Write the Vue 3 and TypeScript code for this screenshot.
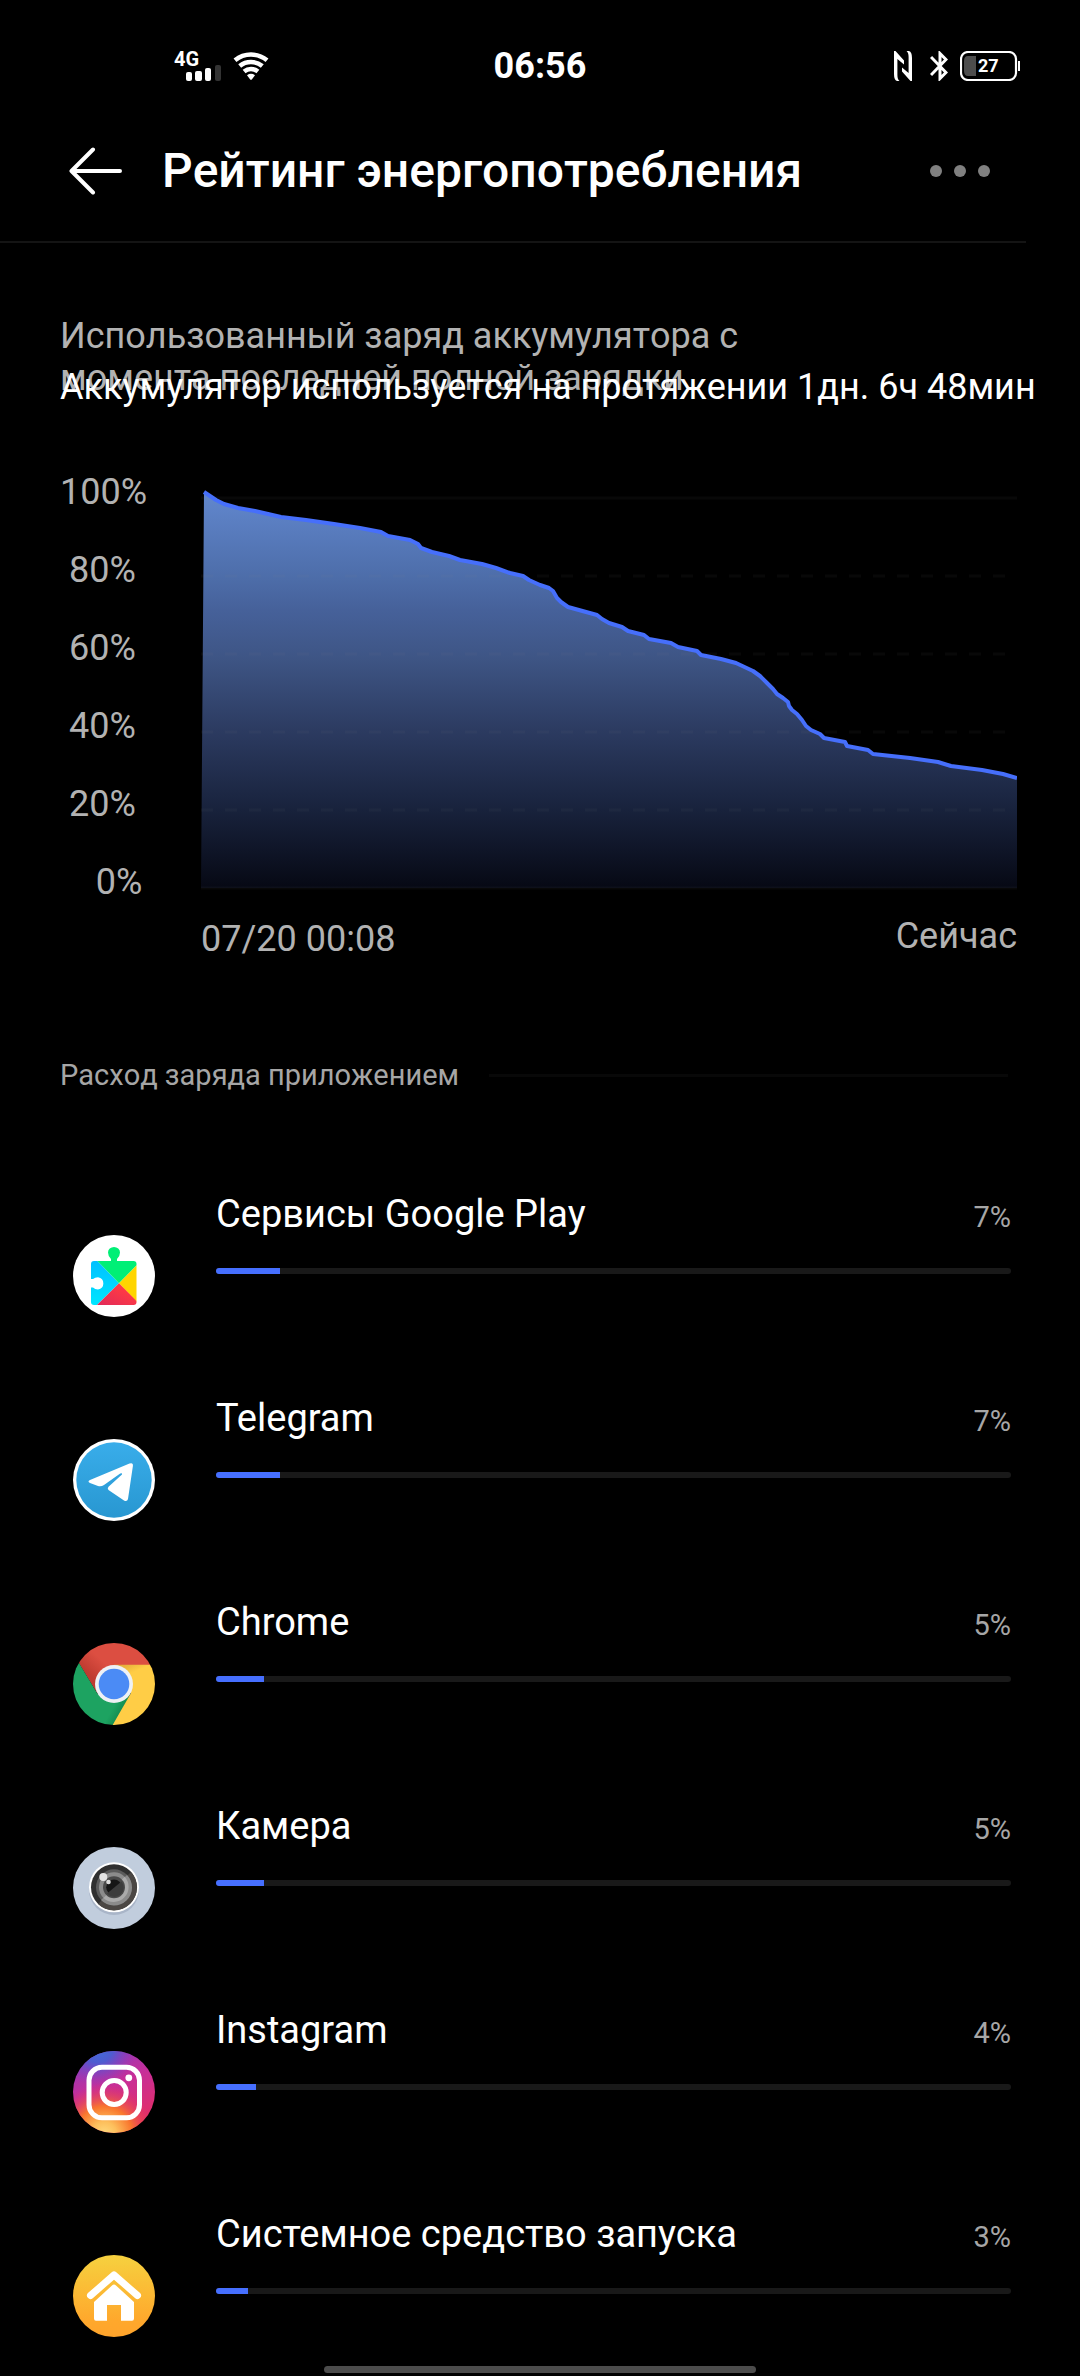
<script setup lang="ts">
type IconName = 'play' | 'telegram' | 'chrome' | 'camera' | 'instagram' | 'launcher'

interface AppUsage {
  name: string
  percent: number
  icon: IconName
}

const apps: AppUsage[] = [
  { name: 'Сервисы Google Play', percent: 7, icon: 'play' },
  { name: 'Telegram', percent: 7, icon: 'telegram' },
  { name: 'Chrome', percent: 5, icon: 'chrome' },
  { name: 'Камера', percent: 5, icon: 'camera' },
  { name: 'Instagram', percent: 4, icon: 'instagram' },
  { name: 'Системное средство запуска', percent: 3, icon: 'launcher' },
]

// Leading blanks indent the shorter labels on the axis.
const axisLabels: string[] = ['100%', ' 80%', ' 60%', ' 40%', ' 20%', '    0%']
const dashedLines: number[] = [86, 164, 242, 320]

// Battery level over time, in chart units (816 x 400).
const levels: [number, number][] = [
  [3, 2], [15, 10], [23, 14], [37, 18], [54, 21], [80, 27], [105, 30], [133, 34],
  [159, 38], [180, 42], [187, 46], [209, 50], [217, 54], [220, 58], [231, 62], [248, 66],
  [259, 70], [281, 74], [295, 78], [309, 83], [322, 86], [328, 90], [339, 95], [348, 98],
  [352, 101], [356, 108], [360, 112], [367, 117], [396, 125], [401, 129], [408, 133],
  [421, 137], [427, 141], [443, 145], [448, 149], [470, 153], [477, 157], [496, 161],
  [500, 165], [520, 169], [535, 173], [552, 181], [559, 186], [566, 193], [572, 199],
  [576, 204], [582, 208], [587, 212], [588, 216], [591, 220], [596, 224], [601, 230],
  [605, 236], [610, 240], [619, 244], [623, 248], [644, 252], [646, 256], [667, 260],
  [672, 264], [709, 268], [737, 272], [750, 276], [781, 280], [802, 284], [816, 288],
]

const linePoints: string = levels.map(([x, y]) => `${x},${y}`).join(' ')
const areaPoints: string = `0,398 ${linePoints} 816,398`

const barWidth = (percent: number): string => `${percent + 1}%`
</script>

<template>
  <div class="page">
    <div class="status">
      <div class="status-left">
        <svg class="signal" width="47" height="30" viewBox="0 0 47 30" role="img" aria-label="Сигнал 4G">
          <text x="0" y="15" class="net">4G</text>
          <rect x="12" y="21" width="6" height="9" rx="2" fill="#fff" />
          <rect x="21" y="20" width="7" height="10" rx="2" fill="#fff" />
          <rect x="31" y="17" width="6" height="13" rx="2" fill="#fff" />
          <rect x="41" y="14" width="6" height="16" rx="2" fill="#333" />
        </svg>
        <svg width="36" height="28" viewBox="0 0 36 28" fill="none" stroke="#fff" stroke-width="4.6" aria-hidden="true">
          <path d="M2 8.2A25.5 25.5 0 0 1 34 8.2M6.7 14A18 18 0 0 1 29.3 14M11.1 19.5A11 11 0 0 1 24.9 19.5" />
          <path d="M14 23.2Q18 20.5 22 23.2L18.8 27.4Q18 28 17.2 27.4Z" fill="#fff" stroke="none" />
        </svg>
      </div>
      <time class="clock">06:56</time>
      <div class="status-right">
        <svg width="18" height="30" viewBox="0 0 18 30" fill="#fff" aria-hidden="true">
          <path d="M0 0H1.5L10 9.5V13.5L3.4 8V24Q3.4 28.5 5.5 30H3Q0 29 0 23Z" />
          <path d="M18 30H16.5L8 20.5V16.5L14.6 22V6Q14.6 1.5 12.5 0H15Q18 1 18 7Z" />
        </svg>
        <svg width="18" height="30" viewBox="0 0 18 30" fill="none" stroke="#fff" stroke-width="3" aria-hidden="true">
          <path d="M1 6L16 21.5L10 27.5V2.5L16 8.5L1 24" />
        </svg>
        <svg class="battery" width="60" height="30" viewBox="0 0 60 30" role="img" aria-label="Батарея 27%">
          <rect x="1" y="1" width="55" height="28" rx="7" fill="none" stroke="#fff" stroke-width="2.2" />
          <path d="M16 5H8Q4 5 4 10V20Q4 25 8 25H16Z" fill="#4d4d4d" />
          <rect x="58" y="10" width="2" height="10" fill="#fff" />
          <text x="18" y="21" class="charge">27</text>
        </svg>
      </div>
    </div>

    <header class="header">
      <button class="back" type="button" aria-label="Назад">
        <svg width="54" height="48" viewBox="0 0 54 48" fill="none" stroke="#fff" stroke-width="4" stroke-linecap="round" stroke-linejoin="round">
          <path d="M24 2.500L2.500 24L24 45.500M3 24H51" />
        </svg>
      </button>
      <h1>Рейтинг энергопотребления</h1>
      <button class="more" type="button" aria-label="Ещё">
        <span></span><span></span><span></span>
      </button>
    </header>
    <div class="divider"></div>

    <main>
      <section class="summary">
        <p class="caption">Использованный заряд аккумулятора с момента последней полной зарядки</p>
        <p class="duration">Аккумулятор используется на протяжении 1дн. 6ч 48мин</p>
      </section>

      <section class="chart">
        <div class="axis">
          <span v-for="label in axisLabels" :key="label">{{ label }}</span>
        </div>
        <div class="plot">
          <svg viewBox="0 0 816 400" preserveAspectRatio="none" role="img" aria-label="Уровень заряда">
            <defs>
              <linearGradient id="area" x1="0" y1="0" x2="0" y2="400" gradientUnits="userSpaceOnUse">
                <stop offset="0" stop-color="#6288cf" />
                <stop offset="0.22" stop-color="#4d6da9" />
                <stop offset="0.3" stop-color="#46619a" />
                <stop offset="0.42" stop-color="#3e5585" />
                <stop offset="0.6" stop-color="#2c3b61" />
                <stop offset="0.8" stop-color="#18223c" />
                <stop offset="1" stop-color="#060813" />
              </linearGradient>
            </defs>
            <polygon :points="areaPoints" fill="url(#area)" />
            <g stroke="#888" stroke-opacity="0.06" stroke-width="3">
              <path d="M0 8H816M0 398H816" />
              <path v-for="y in dashedLines" :key="y" :d="`M0 ${y}H816`" stroke-dasharray="12 12" />
            </g>
            <polyline :points="linePoints" fill="none" stroke="#466ffb" stroke-width="4" stroke-linejoin="round" />
          </svg>
          <div class="range">
            <span class="from">07/20 00:08</span>
            <span>Сейчас</span>
          </div>
        </div>
      </section>

      <section>
        <div class="section-title">
          <h2>Расход заряда приложением</h2>
          <span class="rule"></span>
        </div>

        <ul class="apps">
          <li v-for="app in apps" :key="app.name" class="app">
            <svg class="icon" width="82" height="82" viewBox="0 0 82 82" aria-hidden="true">
              <template v-if="app.icon === 'play'">
                <defs>
                  <linearGradient id="play-blue" x1="0" y1="0" x2="0" y2="1">
                    <stop offset="0" stop-color="#00c0ff" />
                    <stop offset="1" stop-color="#00e6ff" />
                  </linearGradient>
                  <linearGradient id="play-red" x1="1" y1="0" x2="0" y2="1">
                    <stop offset="0.3" stop-color="#ff3a44" />
                    <stop offset="1" stop-color="#e02a5a" />
                  </linearGradient>
                  <clipPath id="play-clip"><rect x="18" y="26" width="45.500" height="44" rx="3" /></clipPath>
                </defs>
                <circle cx="41" cy="41" r="41" fill="#fff" />
                <path d="M38 27V24Q35 21 35 17.500A6 5.500 0 0 1 47 17.500Q47 21 44 24V27Z" fill="#00ef76" />
                <g clip-path="url(#play-clip)">
                  <path d="M18 26H24.500L46 48.300L24 70H18Z" fill="url(#play-blue)" />
                  <path d="M24.500 26H65V29L46 48.300Z" fill="#00ef76" />
                  <path d="M64 30V67L46 48.300Z" fill="#ffd500" />
                  <path d="M24 70L46 48.300L65 67.500V70Z" fill="url(#play-red)" />
                  <path d="M17 44H20Q22 42.300 25 42.300A6.500 6.200 0 0 1 25 54.500Q22 54.500 20 52.500H17Z" fill="#fff" />
                </g>
              </template>

              <template v-else-if="app.icon === 'telegram'">
                <defs>
                  <linearGradient id="tg" x1="0" y1="0" x2="0" y2="1">
                    <stop offset="0" stop-color="#39adea" />
                    <stop offset="1" stop-color="#2897d1" />
                  </linearGradient>
                </defs>
                <circle cx="41" cy="41" r="41" fill="#fff" />
                <circle cx="41" cy="41" r="37.700" fill="url(#tg)" />
                <path d="M17 41L56.500 24.500Q60.300 23.200 59.900 27L55 60Q54.200 63 51 61.500L35.500 51Q34 49.500 35.500 47.700L49 35.500Q49.500 33.500 47.200 34.600L31 46Q28 48 25 47L17 44Q14 42.500 17 41Z" fill="#fff" />
              </template>

              <template v-else-if="app.icon === 'chrome'">
                <defs>
                  <clipPath id="chrome-clip"><circle cx="41" cy="41" r="41" /></clipPath>
                  <linearGradient id="chrome-red" x1="0.100" y1="0.600" x2="0.500" y2="0.300">
                    <stop offset="0" stop-color="#bf3b30" />
                    <stop offset="0.600" stop-color="#dc4e41" />
                  </linearGradient>
                  <linearGradient id="chrome-green" x1="0.950" y1="0.850" x2="0.600" y2="0.650">
                    <stop offset="0" stop-color="#0c7a44" />
                    <stop offset="0.700" stop-color="#1da361" />
                  </linearGradient>
                  <linearGradient id="chrome-yellow" x1="0" y1="0" x2="0.080" y2="0.250">
                    <stop offset="0" stop-color="#d9a035" />
                    <stop offset="1" stop-color="#ffcd46" />
                  </linearGradient>
                </defs>
                <g clip-path="url(#chrome-clip)">
                  <path d="M6 20.300V-2H82V22H41L24.300 50.600Z" fill="url(#chrome-red)" />
                  <path d="M6 20L24.300 50.600L41 60L57.700 50.600L40 84H-4V20Z" fill="url(#chrome-green)" />
                  <path d="M41 21.700H84V84H38.500L57.700 50.600Z" fill="url(#chrome-yellow)" />
                </g>
                <circle cx="41" cy="41" r="19" fill="#eef1f5" />
                <circle cx="41" cy="41" r="15.300" fill="#4b8bf5" />
              </template>

              <template v-else-if="app.icon === 'camera'">
                <circle cx="41" cy="41" r="41" fill="#c1cddd" />
                <circle cx="41" cy="43" r="25" fill="#a9b5c8" />
                <circle cx="41" cy="40.300" r="25" fill="#fff" />
                <circle cx="41" cy="40.300" r="23" fill="#303030" />
                <path d="M25 57A23 23 0 0 0 58 25Z" fill="#4b4744" />
                <circle cx="41" cy="40.300" r="18" fill="#5b5b5b" />
                <circle cx="41" cy="40.300" r="15" fill="#8c8c8c" />
                <path d="M28 53A18 18 0 0 0 54 28Z" fill="#8b8b8b" />
                <path d="M30.400 50.900A15 15 0 0 0 51.600 29.700Z" fill="#aaa" />
                <circle cx="41" cy="40.300" r="11" fill="#4a4a4a" />
                <circle cx="41" cy="40.300" r="7.800" fill="#161616" />
                <path d="M34 46.500A8.800 8.800 0 0 0 48.500 34.500Z" fill="#3c3c3c" />
                <circle cx="30.300" cy="30" r="4" fill="#e4e4e4" />
                <circle cx="35.500" cy="35" r="2.300" fill="#ddd" />
              </template>

              <template v-else-if="app.icon === 'instagram'">
                <defs>
                  <linearGradient id="ig-base" x1="0.200" y1="0" x2="0.600" y2="1">
                    <stop offset="0" stop-color="#8a3ac0" />
                    <stop offset="0.450" stop-color="#c72e98" />
                    <stop offset="1" stop-color="#e62e62" />
                  </linearGradient>
                  <radialGradient id="ig-warm" cx="0.380" cy="1.020" r="0.620">
                    <stop offset="0" stop-color="#ffdc80" />
                    <stop offset="0.250" stop-color="#fdbf5c" />
                    <stop offset="0.550" stop-color="#f9772e" />
                    <stop offset="1" stop-color="#e62e62" stop-opacity="0" />
                  </radialGradient>
                  <radialGradient id="ig-cool" cx="0.300" cy="-0.050" r="0.480">
                    <stop offset="0" stop-color="#3f6fdc" />
                    <stop offset="0.400" stop-color="#4f5cd0" />
                    <stop offset="1" stop-color="#8a3ac0" stop-opacity="0" />
                  </radialGradient>
                </defs>
                <circle cx="41" cy="41" r="41" fill="url(#ig-base)" />
                <circle cx="41" cy="41" r="41" fill="url(#ig-warm)" />
                <circle cx="41" cy="41" r="41" fill="url(#ig-cool)" />
                <g fill="none" stroke="#fff" stroke-width="5">
                  <rect x="16" y="16.300" width="50.500" height="50.500" rx="13" />
                  <circle cx="41.200" cy="41.500" r="12" />
                </g>
                <circle cx="55.800" cy="26.800" r="3.400" fill="#fff" />
              </template>

              <template v-else>
                <defs>
                  <linearGradient id="home" x1="0" y1="0" x2="0" y2="1">
                    <stop offset="0" stop-color="#f6d13f" />
                    <stop offset="0.800" stop-color="#ffa82c" />
                    <stop offset="1" stop-color="#ffa42c" />
                  </linearGradient>
                </defs>
                <circle cx="41" cy="41" r="41" fill="url(#home)" />
                <path d="M17.500 40.500L41 20L64.500 40.500" fill="none" stroke="#fff" stroke-width="7" stroke-linecap="round" stroke-linejoin="round" />
                <path d="M39 30.500Q41 28.500 43 30.500L61 47V63.500Q61 65.700 59 65.700H48V50H34V65.700H23Q21 65.700 21 63.500V47Z" fill="#fff" />
              </template>
            </svg>

            <div class="usage">
              <div class="usage-head">
                <span class="name">{{ app.name }}</span>
                <span class="percent">{{ app.percent }}%</span>
              </div>
              <div class="track" role="progressbar" :aria-label="app.name" :aria-valuenow="app.percent">
                <div class="fill" :style="{ width: barWidth(app.percent) }"></div>
              </div>
            </div>
          </li>
        </ul>
      </section>
    </main>

    <div class="nav"><div class="handle"></div></div>
  </div>
</template>

<style>
body {
  background: #000;
}
</style>

<style scoped>
.page {
  font-family: Roboto, 'Noto Sans', sans-serif;
  background: #000;
  color: #fff;
  overflow: hidden;
}

h1,
h2,
p,
ul {
  margin: 0;
  padding: 0;
}

svg {
  display: block;
  flex: none;
}

button {
  border: 0;
  padding: 0;
  background: none;
  color: inherit;
}

.status {
  display: grid;
  grid-template-columns: 1fr auto 1fr;
  align-items: center;
  padding: 45px 60px 15px;
}

.status-left {
  display: flex;
  align-items: center;
  gap: 12px;
  padding-left: 114px;
}

.status-right {
  display: flex;
  align-items: center;
  justify-content: flex-end;
  gap: 18px;
}

.signal {
  overflow: visible;
}

.battery {
  margin-left: -6px;
}

.net {
  font-size: 20px;
  font-weight: 700;
  fill: #fff;
}

.charge {
  font-size: 18px;
  font-weight: 700;
  fill: #fff;
}

.clock {
  font-size: 36px;
  line-height: 42px;
  font-weight: 700;
}

.header {
  display: flex;
  align-items: center;
  box-sizing: border-box;
  height: 139px;
  padding: 0 90px 2px 69px;
}

.back {
  display: flex;
  width: 93px;
}

h1 {
  flex: 1;
  font-size: 48px;
  line-height: 56px;
  font-weight: 500;
  font-kerning: none;
  white-space: nowrap;
}

.more {
  display: flex;
  gap: 12px;
}

.more span {
  width: 12px;
  height: 12px;
  border-radius: 50%;
  background: #808080;
}

.divider {
  width: 95%;
  height: 2px;
  background: #141414;
}

.summary {
  padding: 72px 0 0 60px;
  font-size: 36px;
  line-height: 42px;
  font-kerning: none;
}

.caption {
  width: 75%;
  color: #b2b2b2;
}

/* The duration line runs into the second line of the caption. */
.duration {
  position: relative;
  margin-top: -33px;
  white-space: nowrap;
}

.chart {
  display: grid;
  grid-template-columns: 141px 1fr;
  padding: 45px 63px 0 60px;
  font-size: 36px;
  line-height: 42px;
  color: #b2b2b2;
}

.axis {
  display: flex;
  flex-direction: column;
  white-space: pre;
  line-height: 78px;
}

.plot {
  padding-top: 37px;
}

.plot svg {
  width: 100%;
  height: 400px;
}

.range {
  display: flex;
  justify-content: space-between;
  align-items: flex-start;
  padding-top: 25px;
}

.from {
  line-height: 48px;
}

.section-title {
  display: flex;
  align-items: center;
  gap: 30px;
  padding: 94px 72px 0 60px;
}

h2 {
  font-size: 29px;
  line-height: 36px;
  font-weight: 400;
  font-kerning: none;
  color: #a6a6a6;
}

.rule {
  flex: 1;
  height: 3px;
  background: #080808;
}

.apps {
  display: flex;
  flex-direction: column;
  gap: 78px;
  padding: 98px 69px 0 73px;
  list-style: none;
}

.app {
  display: flex;
  align-items: flex-end;
  gap: 61px;
}

.usage {
  flex: 1;
  height: 126px;
}

.usage-head {
  display: flex;
  justify-content: space-between;
  align-items: baseline;
  height: 46px;
  margin-bottom: 31px;
  line-height: 46px;
}

.name {
  font-size: 38px;
}

.percent {
  font-size: 29px;
  color: #a6a6a6;
}

.track {
  height: 6px;
  border-radius: 3px;
  background: #191919;
}

.fill {
  height: 6px;
  border-radius: 3px 0 0 3px;
  background: #466fff;
}

.nav {
  display: flex;
  justify-content: center;
  padding: 29px 0 3px;
}

.handle {
  width: 40%;
  height: 7px;
  border-radius: 4px;
  background: #4c4c4c;
}
</style>
